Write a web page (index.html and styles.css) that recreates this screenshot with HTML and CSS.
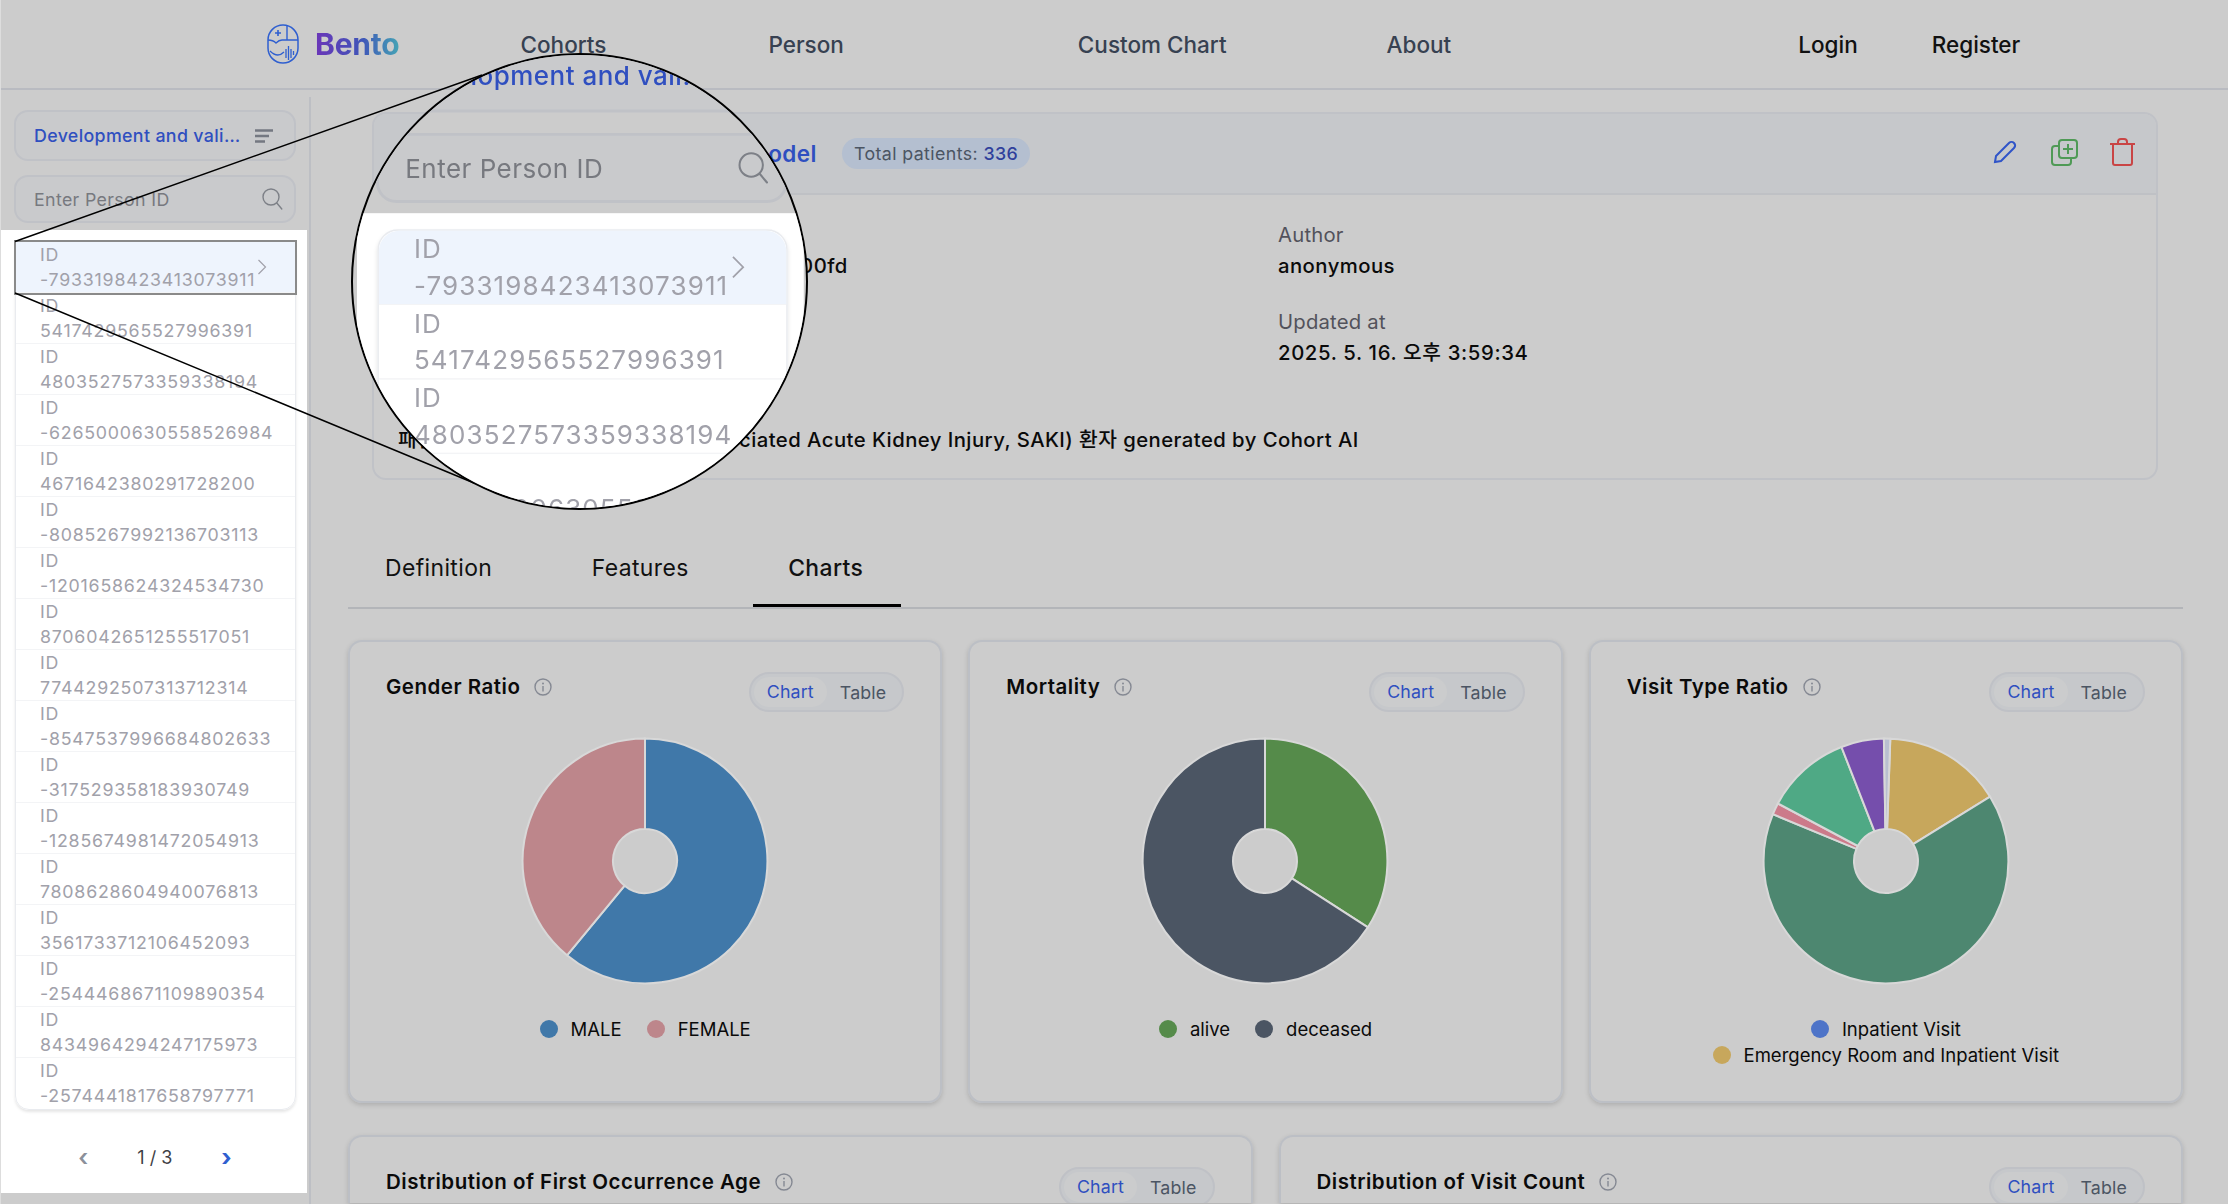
FILE: index.html
```html
<!DOCTYPE html>
<html lang="ko">
<head>
    <meta charset="UTF-8">
    <meta name="viewport" content="width=device-width, initial-scale=1.0">
    <title>Bento - Cohort Detail</title>
    <link rel="stylesheet" href="styles.css">
</head>
<body>
    <!-- shared icons -->
    <svg class="icon-defs" aria-hidden="true">
        <symbol id="i-info" viewBox="0 0 18 18">
            <circle cx="9" cy="9" r="8" fill="none" stroke="currentColor" stroke-width="1.4"/>
            <path d="M9 8v5.5" fill="none" stroke="currentColor" stroke-width="1.4"/>
            <circle cx="9" cy="5.4" r="1" fill="currentColor"/>
        </symbol>
        <symbol id="i-search" viewBox="0 0 22 24">
            <circle cx="10" cy="10" r="8" fill="none" stroke="currentColor" stroke-width="1.4"/>
            <path d="M15.8 16l5 6" fill="none" stroke="currentColor" stroke-width="1.4" stroke-linecap="round"/>
        </symbol>
        <symbol id="i-menu" viewBox="0 0 18 14">
            <path d="M0 1.5h18M0 7h14M0 12.5h10" fill="none" stroke="currentColor" stroke-width="2.4"/>
        </symbol>
        <symbol id="i-chevron" viewBox="0 0 10 16">
            <path d="M1.5 1l7 7-7 7" fill="none" stroke="currentColor" stroke-width="1.2"/>
        </symbol>
    </svg>

    <header class="topbar">
        <a class="brand">
            <svg class="brand-logo" viewBox="0 0 32 40">
                <rect x="1" y="1" width="30" height="38" rx="15" fill="none" stroke="#2f5fd0" stroke-width="1.5"/>
                <path d="M20 1v15M1 16c4 0 6 1 8 3 2-2 4-3 6-3h16" fill="none" stroke="#2f5fd0" stroke-width="1.4"/>
                <path d="M11 6v6M8 9h6" fill="none" stroke="#2f5fd0" stroke-width="1.6"/>
                <path d="M3 27c5 5 10 5 14 1M19 34V25M21.500 36V22M24 34V25M26.500 31v-4" fill="none" stroke="#2f5fd0" stroke-width="1.3"/>
            </svg>
            <span class="brand-name">Bento</span>
        </a>
        <a class="nav-link nav-cohorts">Cohorts</a>
        <a class="nav-link nav-person">Person</a>
        <a class="nav-link nav-custom">Custom Chart</a>
        <a class="nav-link nav-about">About</a>
        <a class="nav-link nav-auth nav-login">Login</a>
        <a class="nav-link nav-auth nav-register">Register</a>
    </header>

    <div class="layout">
        <aside class="sidebar">
            <div class="cohort-select">
                <span class="cohort-select-name">Development and validation of model</span>
                <svg class="menu-icon"><use href="#i-menu"/></svg>
            </div>
            <div class="person-search">
                <span>Enter Person ID</span>
                <svg class="search-icon"><use href="#i-search"/></svg>
            </div>
            <div class="person-panel">
                <div class="person-list">
                    <div class="person-row selected marked">
                        <div>ID<br>-7933198423413073911</div>
                        <svg class="row-chevron"><use href="#i-chevron"/></svg>
                    </div>
                    <div class="person-row">ID<br>5417429565527996391</div>
                    <div class="person-row">ID<br>4803527573359338194</div>
                    <div class="person-row">ID<br>-6265000630558526984</div>
                    <div class="person-row">ID<br>4671642380291728200</div>
                    <div class="person-row">ID<br>-8085267992136703113</div>
                    <div class="person-row">ID<br>-1201658624324534730</div>
                    <div class="person-row">ID<br>8706042651255517051</div>
                    <div class="person-row">ID<br>7744292507313712314</div>
                    <div class="person-row">ID<br>-8547537996684802633</div>
                    <div class="person-row">ID<br>-317529358183930749</div>
                    <div class="person-row">ID<br>-1285674981472054913</div>
                    <div class="person-row">ID<br>7808628604940076813</div>
                    <div class="person-row">ID<br>3561733712106452093</div>
                    <div class="person-row">ID<br>-2544468671109890354</div>
                    <div class="person-row">ID<br>8434964294247175973</div>
                    <div class="person-row">ID<br>-2574441817658797771</div>
                </div>
                <div class="pager">
                    <span class="pager-prev">‹</span>
                    <span class="pager-text">1 / 3</span>
                    <span class="pager-next">›</span>
                </div>
            </div>
        </aside>

        <main class="content">
            <section class="detail-card">
                <div class="detail-head">
                    <h1 class="detail-title">Development and validation of model</h1>
                    <span class="patient-badge">Total patients: <b>336</b></span>
                    <div class="detail-actions">
                        <!-- edit -->
                        <svg class="action-icon" width="24" height="24" viewBox="0 0 24 24" fill="none" stroke="#2f54c8" stroke-width="2">
                            <path d="M2 22l1-6L16 3c1.500-1.500 3.500-1.500 5 0s1.500 3.500 0 5L8 21z"/>
                        </svg>
                        <!-- copy -->
                        <svg class="action-icon action-copy" width="27" height="27" viewBox="0 0 27 27" fill="none" stroke="#4f9a56" stroke-width="2">
                            <rect x="8" y="1" width="18" height="18" rx="3"/>
                            <path d="M8 7H4a3 3 0 0 0-3 3v13a3 3 0 0 0 3 3h13a3 3 0 0 0 3-3v-4"/>
                            <path d="M17 5v10M12 10h10"/>
                        </svg>
                        <!-- delete -->
                        <svg class="action-icon" width="25" height="28" viewBox="0 0 25 28" fill="none" stroke="#c94545" stroke-width="2">
                            <path d="M0 6h25M3 6v19a2 2 0 0 0 2 2h15a2 2 0 0 0 2-2V6M8 6V4a3 3 0 0 1 3-3h3a3 3 0 0 1 3 3v2"/>
                        </svg>
                    </div>
                </div>
                <div class="detail-body">
                    <div class="detail-field">
                        <div class="field-label">Cohort ID</div>
                        <div class="field-value">0196d6a4-53c1-7a3e-9f21-8c41e27b9300fd</div>
                    </div>
                    <div class="detail-field">
                        <div class="field-label">Author</div>
                        <div class="field-value">anonymous</div>
                    </div>
                    <div class="detail-field">
                        <div class="field-label">Created at</div>
                        <div class="field-value field-date">2025. 5. 16. 오후 3:59:34</div>
                    </div>
                    <div class="detail-field">
                        <div class="field-label">Updated at</div>
                        <div class="field-value field-date">2025. 5. 16. 오후 3:59:34</div>
                    </div>
                    <div class="detail-field detail-field-wide">
                        <div class="field-label">Description</div>
                        <div class="field-value">패혈증 관련 급성 신손상(Sepsis-associated Acute Kidney Injury, SAKI) 환자 generated by Cohort AI</div>
                    </div>
                </div>
            </section>

            <nav class="tabs">
                <a class="tab">Definition</a>
                <a class="tab">Features</a>
                <a class="tab active">Charts</a>
            </nav>

            <div class="chart-row">
                <section class="chart-card">
                    <div class="chart-head">
                        <h2 class="chart-title">Gender Ratio <svg class="info-icon"><use href="#i-info"/></svg></h2>
                        <div class="view-toggle"><span class="toggle-on">Chart</span><span class="toggle-off">Table</span></div>
                    </div>
                    <svg class="pie" viewBox="-125 -125 250 250">
                        <path fill="#4078a9" d="M0,-122.400 A122.400 122.400 0 1 1 -78,94.300 L-20.400,24.700 A32 32 0 1 0 0,-32Z"/>
                        <path fill="#bd868b" d="M-78,94.300 A122.400 122.400 0 0 1 0,-122.400 L0,-32 A32 32 0 0 0 -20.400,24.700Z"/>
                    </svg>
                    <div class="legend">
                        <div class="legend-line">
                            <span class="legend-item"><i class="dot dot-male"></i>MALE</span>
                            <span class="legend-item"><i class="dot dot-female"></i>FEMALE</span>
                        </div>
                    </div>
                </section>

                <section class="chart-card">
                    <div class="chart-head">
                        <h2 class="chart-title">Mortality <svg class="info-icon"><use href="#i-info"/></svg></h2>
                        <div class="view-toggle"><span class="toggle-on">Chart</span><span class="toggle-off">Table</span></div>
                    </div>
                    <svg class="pie" viewBox="-125 -125 250 250">
                        <path fill="#558b4a" d="M0,-122.400 A122.400 122.400 0 0 1 102.900,66.300 L26.900,17.300 A32 32 0 0 0 0,-32Z"/>
                        <path fill="#4b5563" d="M102.900,66.300 A122.400 122.400 0 1 1 0,-122.400 L0,-32 A32 32 0 1 0 26.900,17.300Z"/>
                    </svg>
                    <div class="legend">
                        <div class="legend-line">
                            <span class="legend-item"><i class="dot dot-alive"></i>alive</span>
                            <span class="legend-item"><i class="dot dot-deceased"></i>deceased</span>
                        </div>
                    </div>
                </section>

                <section class="chart-card">
                    <div class="chart-head">
                        <h2 class="chart-title">Visit Type Ratio <svg class="info-icon"><use href="#i-info"/></svg></h2>
                        <div class="view-toggle"><span class="toggle-on">Chart</span><span class="toggle-off">Table</span></div>
                    </div>
                    <svg class="pie" viewBox="-125 -125 250 250">
                        <path fill="#c7a75c" d="M4.300,-122.300 A122.400 122.400 0 0 1 104.100,-64.300 L27.200,-16.800 A32 32 0 0 0 1.100,-32Z"/>
                        <path fill="#4d8770" d="M104.100,-64.300 A122.400 122.400 0 1 1 -113.100,-46.800 L-29.600,-12.200 A32 32 0 1 0 27.200,-16.800Z"/>
                        <path fill="#cc7a8a" d="M-113.100,-46.800 A122.400 122.400 0 0 1 -108.100,-57.500 L-28.300,-15 A32 32 0 0 0 -29.600,-12.200Z"/>
                        <path fill="#4fa985" d="M-108.100,-57.500 A122.400 122.400 0 0 1 -44.500,-114 L-11.600,-29.800 A32 32 0 0 0 -28.300,-15Z"/>
                        <path fill="#754eac" d="M-44.500,-114 A122.400 122.400 0 0 1 -2.100,-122.400 L-0.600,-32 A32 32 0 0 0 -11.600,-29.800Z"/>
                        <path fill="#b9bfd0" d="M-2.100,-122.400 A122.400 122.400 0 0 1 4.300,-122.300 L1.100,-32 A32 32 0 0 0 -0.600,-32Z"/>
                    </svg>
                    <div class="legend">
                        <div class="legend-line">
                            <span class="legend-item"><i class="dot dot-inpatient"></i>Inpatient Visit</span>
                        </div>
                        <div class="legend-line">
                            <span class="legend-item"><i class="dot dot-emergency"></i>Emergency Room and Inpatient Visit</span>
                        </div>
                    </div>
                </section>
            </div>

            <div class="chart-row chart-row-second">
                <section class="chart-card">
                    <div class="chart-head">
                        <h2 class="chart-title">Distribution of First Occurrence Age <svg class="info-icon"><use href="#i-info"/></svg></h2>
                        <div class="view-toggle"><span class="toggle-on">Chart</span><span class="toggle-off">Table</span></div>
                    </div>
                </section>
                <section class="chart-card">
                    <div class="chart-head">
                        <h2 class="chart-title">Distribution of Visit Count <svg class="info-icon"><use href="#i-info"/></svg></h2>
                        <div class="view-toggle"><span class="toggle-on">Chart</span><span class="toggle-off">Table</span></div>
                    </div>
                </section>
            </div>
        </main>
    </div>

    <!-- magnifier callout over the sidebar -->
    <svg class="lens-lines" width="2228" height="1204">
        <path d="M15 241.500L482 75M15 293L474 483" fill="none" stroke="#000" stroke-width="1.500"/>
    </svg>
    <div class="lens">
        <div class="sidebar lens-view">
            <div class="cohort-select">
                <span class="cohort-select-name">Development and validation of model</span>
                <svg class="menu-icon"><use href="#i-menu"/></svg>
            </div>
            <div class="person-search">
                <span>Enter Person ID</span>
                <svg class="search-icon"><use href="#i-search"/></svg>
            </div>
            <div class="person-panel">
                <div class="person-list">
                    <div class="person-row selected">
                        <div>ID<br>-7933198423413073911</div>
                        <svg class="row-chevron"><use href="#i-chevron"/></svg>
                    </div>
                    <div class="person-row">ID<br>5417429565527996391</div>
                    <div class="person-row">ID<br>4803527573359338194</div>
                    <div class="person-row">ID<br>-6265000630558526984</div>
                </div>
            </div>
        </div>
    </div>
</body>
</html>
```

FILE: styles.css
```css
/* page */
* {
    box-sizing: border-box;
}

html {
    height: 1204px;
    overflow: hidden;
}

body {
    margin: 0;
    width: 2228px;
    height: 1204px;
    overflow: hidden;
    position: relative;
    background-color: #cccccc;
    border-left: 1px solid #dddddd;
    color: #0a0a0a;
    font-family: Inter, "Noto Sans CJK KR", sans-serif;
}

.icon-defs {
    position: absolute;
    width: 0;
    height: 0;
}

/* top bar */
.topbar {
    display: flex;
    align-items: center;
    height: 90px;
    border-bottom: 2px solid #b9bbc1;
    padding-left: 266px;
}

.brand {
    display: flex;
    align-items: center;
    gap: 16px;
}

.brand-logo {
    width: 32px;
    height: 40px;
}

.brand-name {
    font-size: 30px;
    font-weight: 700;
    letter-spacing: -0.2px;
    background: linear-gradient(90deg, #6b35b8 0%, #3f55b8 55%, #45a5b5 100%);
    -webkit-background-clip: text;
    background-clip: text;
    color: transparent;
}

.nav-link {
    font-size: 22.5px;
    font-weight: 500;
    color: #374151;
}

.nav-auth {
    color: #111111;
}

.nav-cohorts { margin-left: 121px; }
.nav-person { margin-left: 162px; }
.nav-custom { margin-left: 234px; }
.nav-about { margin-left: 160px; }
.nav-login { margin-left: 347px; }
.nav-register { margin-left: 74px; }

/* layout */
.layout {
    display: flex;
    height: 1114px;
}

.sidebar {
    flex: none;
    width: 310px;
    height: 1107px;
    margin-top: 7px;
    padding-top: 13px;
    border-right: 2px solid #bdbfc4;
}

.cohort-select,
.person-search {
    display: flex;
    align-items: center;
    justify-content: space-between;
    width: 282px;
    margin-left: 13px;
    padding: 0 17px 0 18px;
    border: 2px solid #c0c2c7;
    border-radius: 14px;
    background-color: #c9cacc;
}

.cohort-select {
    height: 51px;
    margin-bottom: 14px;
}

.cohort-select-name {
    width: 208px;
    overflow: hidden;
    white-space: nowrap;
    text-overflow: ellipsis;
    font-size: 17.8px;
    font-weight: 500;
    letter-spacing: 0.35px;
    color: #2f4fc0;
}

.menu-icon {
    width: 18px;
    height: 14px;
    margin-right: 4px;
    color: #747881;
}

.person-search {
    height: 48px;
    font-size: 17.8px;
    letter-spacing: 0.35px;
    color: #77797f;
}

.search-icon {
    width: 22px;
    height: 24px;
    margin-right: -6px;
    color: #7d8087;
}

/* person list */
.person-panel {
    width: 306px;
    height: 963px;
    margin-top: 7px;
    padding: 11px 11px 0 14px;
    background-color: #ffffff;
}

.person-list {
    border: 1px solid #e9ebef;
    border-radius: 14px;
    box-shadow: 0 2px 3px rgba(0, 0, 0, 0.1);
}

.person-row {
    position: relative;
    height: 51px;
    padding-left: 24px;
    border-bottom: 1px solid #f3f4f6;
    font-size: 17.8px;
    line-height: 25.4px;
    letter-spacing: 0.78px;
    color: #a1a1aa;
    white-space: nowrap;
}

.person-row:last-child {
    border-bottom: none;
}

.person-row.selected {
    display: flex;
    align-items: center;
    justify-content: space-between;
    border-radius: 14px 14px 0 0;
    background-color: #eef4fd;
}

.person-row.marked {
    border-radius: 0;
    outline: 2px solid #8a8a8a;
}

.row-chevron {
    width: 10px;
    height: 16px;
    margin-right: 28px;
    color: #a1a1aa;
}

.pager {
    display: flex;
    justify-content: center;
    align-items: center;
    gap: 49px;
    margin-top: 37px;
    padding-right: 1px;
    font-size: 18px;
    color: #3f3f46;
}

.pager-prev,
.pager-next {
    font-size: 24px;
    font-weight: 600;
    line-height: 20px;
    color: #8b909a;
}

.pager-next {
    font-weight: 700;
    color: #2f5fd0;
}

/* main */
.content {
    flex: 1;
    padding: 22px 45px 0 37px;
}

.detail-card {
    margin: 0 25px 0 24px;
    height: 368px;
    border: 2px solid #c0c2c7;
    border-radius: 14px;
}

.detail-head {
    display: flex;
    align-items: center;
    height: 81px;
    padding: 0 21px 0 24px;
    border-bottom: 2px solid #bfc1c5;
    border-radius: 12px 12px 0 0;
    background-color: #c6c8cb;
}

.detail-title {
    margin: 0;
    font-size: 22.5px;
    font-weight: 600;
    letter-spacing: 0.45px;
    color: #2f4fc0;
    white-space: nowrap;
}

.patient-badge {
    margin-left: 25px;
    padding: 0 12px;
    height: 31px;
    border-radius: 16px;
    background-color: #b4bfd0;
    font-size: 17.8px;
    line-height: 31px;
    letter-spacing: 0.4px;
    color: #4b5563;
}

.patient-badge b {
    font-weight: 500;
    color: #2f3f9c;
}

.detail-actions {
    display: flex;
    align-items: center;
    gap: 34px;
    margin-top: -3px;
    margin-left: auto;
}

.action-copy {
    margin-right: -2px;
}

.detail-body {
    display: grid;
    grid-template-columns: 880px 1fr;
    row-gap: 24px;
    padding: 24px 24px 0;
}

.detail-field-wide {
    grid-column: 1 / 3;
}

.field-label {
    font-size: 20.3px;
    line-height: 31px;
    letter-spacing: 0.2px;
    color: #52525b;
}

.field-value {
    font-size: 20.3px;
    font-weight: 500;
    line-height: 32px;
    letter-spacing: 0.45px;
    color: #0a0a0a;
}

.field-date {
    letter-spacing: 0.64px;
}

/* tabs */
.tabs {
    display: flex;
    gap: 29.5px;
    height: 79px;
    margin-top: 50px;
    padding-left: 2px;
    border-bottom: 2px solid #b3b5b9;
}

.tab {
    height: 77px;
    padding: 22px 35px 0;
    font-size: 22.9px;
    line-height: 32px;
    letter-spacing: 0.4px;
    color: #111111;
}

.tab.active {
    padding-right: 38px;
    border-bottom: 3px solid #000000;
    font-weight: 500;
}

/* chart cards */
.chart-row {
    display: flex;
    gap: 26px;
    margin-top: 31px;
}

.chart-row-second {
    margin-top: 32px;
}

.chart-card {
    flex: 1;
    height: 463px;
    padding-top: 30px;
    border: 2px solid #bcbfc5;
    border-radius: 14px;
    box-shadow: 0 2px 5px rgba(0, 0, 0, 0.15);
}

/* second row is cut by the window */
.chart-row-second .chart-card {
    height: 68px;
    overflow: hidden;
    border-bottom: none;
    border-radius: 14px 14px 0 0;
}

.chart-head {
    display: flex;
    justify-content: space-between;
    align-items: flex-start;
    padding: 0 36px;
}

.chart-title {
    display: flex;
    align-items: center;
    gap: 14px;
    margin: 1px 0 0;
    font-size: 20.5px;
    font-weight: 600;
    line-height: 28px;
    letter-spacing: 0.5px;
}

.info-icon {
    width: 18px;
    height: 18px;
    color: #858993;
}

.view-toggle {
    display: flex;
    align-items: center;
    height: 40px;
    padding: 0 16px 0 3px;
    border: 2px solid #bfc1c6;
    border-radius: 20px;
    background-color: #c6c8cb;
    font-size: 17.8px;
    letter-spacing: 0.15px;
}

.toggle-on {
    height: 30px;
    padding: 0 13px;
    border-radius: 15px;
    background-color: #cbcccd;
    line-height: 30px;
    color: #2f4fc0;
}

.toggle-off {
    margin-left: 13px;
    color: #4b5563;
}

.pie {
    display: block;
    width: 250px;
    height: 250px;
    margin: 24px auto 0;
}

.pie path {
    stroke: #d8d8d8;
    stroke-width: 2;
}

.legend {
    margin-top: 30px;
    font-size: 18.5px;
    line-height: 26px;
}

.legend-line {
    display: flex;
    justify-content: center;
    gap: 25px;
}

.legend-item {
    display: flex;
    align-items: center;
    gap: 13px;
}

.dot {
    width: 18px;
    height: 18px;
    border-radius: 50%;
}

.dot-male { background-color: #4078a9; }
.dot-female { background-color: #bd868b; }
.dot-alive { background-color: #558b4a; }
.dot-deceased { background-color: #4b5563; }
.dot-inpatient { background-color: #4e74c8; }
.dot-emergency { background-color: #c7a75c; }

/* magnifier */
.lens-lines {
    position: absolute;
    top: 0;
    left: -1px;
}

.lens {
    position: absolute;
    top: 53px;
    left: 350px;
    width: 457px;
    height: 457px;
    overflow: hidden;
    border: 2px solid #000000;
    border-radius: 50%;
    background-color: #cccccc;
}

.lens-view {
    position: absolute;
    top: -36px;
    left: 4px;
    height: auto;
    margin-top: 0;
    transform: scale(1.46);
    transform-origin: 0 0;
}

.lens-view .person-panel {
    height: 216px;
}
```
